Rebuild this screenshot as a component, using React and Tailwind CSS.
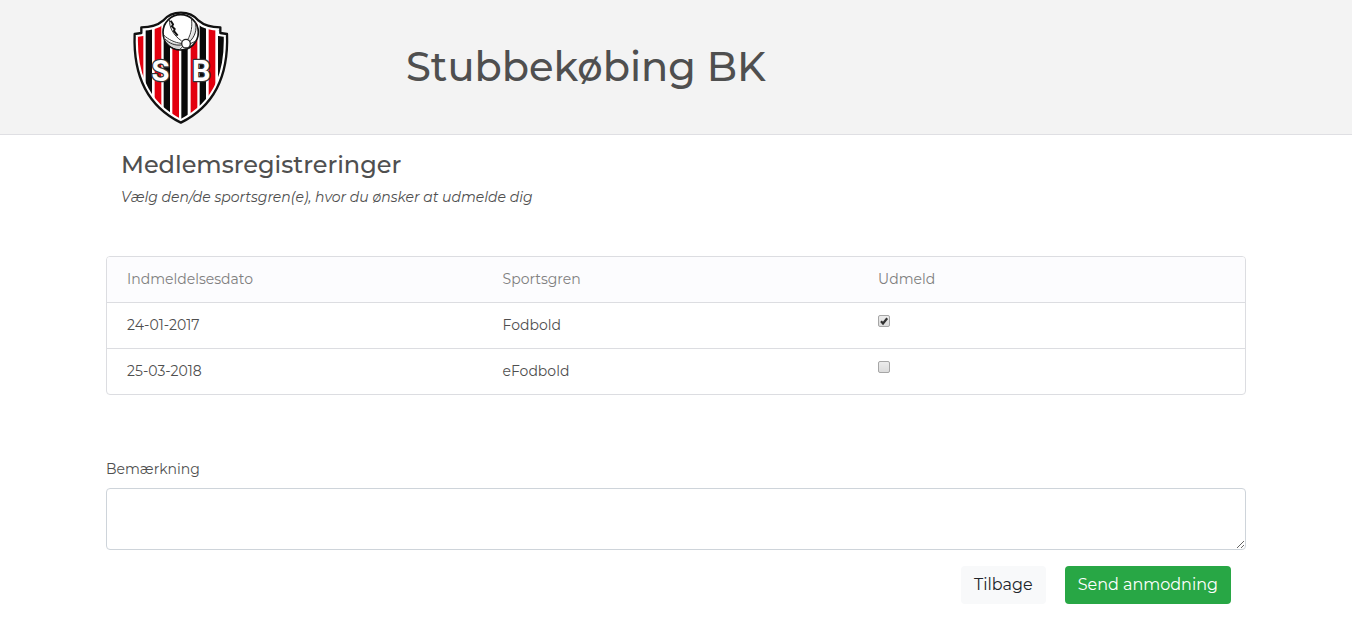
import { useState } from 'react';

const registrations = [
  { id: 1, date: '24-01-2017', sport: 'Fodbold' },
  { id: 2, date: '25-03-2018', sport: 'eFodbold' },
];

const shieldPath =
  'M167.500 23C146 23 127 32 114 47C97 62 74 67 49 67V84L29 87C25 190 50 295 167.500 353C285 295 310 190 306 87L286 84V67C261 67 238 62 221 47C208 32 189 23 167.500 23Z';

const ClubLogo = () => (
  <svg viewBox="-12 6 360 360" className="size-[120px]" role="img" aria-label="Stubbekøbing BK">
    <defs>
      <clipPath id="shield">
        <path d={shieldPath} />
      </clipPath>
    </defs>
    <path d={shieldPath} fill="#fff" />
    <g clipPath="url(#shield)">
      {[35, 89, 142, 197, 251].map((x) => (
        <rect key={x} x={x} y="20" width="20" height="340" fill="#e3000f" />
      ))}
      {[62, 116, 169, 224, 279].map((x) => (
        <rect key={x} x={x} y="20" width="19" height="340" fill="#0a0a0a" />
      ))}
    </g>
    <path d={shieldPath} fill="none" stroke="#fff" strokeWidth="20" clipPath="url(#shield)" />
    <path d={shieldPath} fill="none" stroke="#111" strokeWidth="7" strokeLinejoin="round" />
    <circle cx="167" cy="82" r="53" fill="#fff" stroke="#111" strokeWidth="5" />
    <path d="M117 97C130 108 150 116 168 118L165 131C142 132 124 118 117 97Z" fill="#d4d4d4" />
    <path d="M206 50C219 68 216 91 194 110L190 104C203 86 207 68 206 50Z" fill="#e2e2e2" />
    <g fill="none" stroke="#333" strokeWidth="3">
      <path d="M134 44C131 65 146 92 170 108" />
      <path d="M199 40C203 62 199 86 188 104" />
      <path d="M210 51C218 73 209 96 193 111" />
      <path d="M116 90C130 104 150 113 168 115" />
      <path d="M119 101C134 117 152 122 168 120" />
      <path d="M172 126L162 135M187 128L193 130M194 117L213 108" />
    </g>
    <path d="M137 47L144 58L141 64L149 72L147 78L158 92" fill="none" stroke="#111" strokeWidth="6" />
    <circle cx="183" cy="116" r="13" fill="#fff" stroke="#222" strokeWidth="4" />
    <g
      className="font-[Roboto,sans-serif]"
      fontSize="87"
      fontWeight="700"
      textAnchor="middle"
      fill="#fff"
      stroke="#333"
      strokeWidth="8"
      strokeLinejoin="round"
      paintOrder="stroke"
    >
      <text x="106" y="229">S</text>
      <text x="229" y="229">B</text>
    </g>
  </svg>
);

const Checkbox = ({ checked, onChange, label }) => (
  <label className="grid size-3">
    <input
      type="checkbox"
      checked={checked}
      onChange={onChange}
      aria-label={label}
      className="col-start-1 row-start-1 size-3 appearance-none rounded-xs border border-[#a6a6a6] bg-linear-to-b from-[#ececec] to-[#dcdcdc]"
    />
    {checked && (
      <svg viewBox="0 0 12 12" className="pointer-events-none col-start-1 row-start-1 size-3">
        <path d="M3 6.300L5 8.500L9.200 3.200" fill="none" stroke="#333" strokeWidth="2.200" />
      </svg>
    )}
  </label>
);

const App = () => {
  const [selected, setSelected] = useState([1]);
  const [remark, setRemark] = useState('');

  const toggle = (id) => {
    setSelected((prev) => (prev.includes(id) ? prev.filter((item) => item !== id) : [...prev, id]));
  };

  return (
    <div className="font-[Montserrat,Inter,sans-serif] text-[14px] leading-[21px] text-[#4f4f4f]">
      <header className="border-b border-[#dfdfe3] bg-[#f3f3f3] py-[7px]">
        <div className="mx-auto grid max-w-[1140px] grid-cols-4 items-center">
          <div className="px-[15px]">
            <ClubLogo />
          </div>
          <h1 className="col-span-3 px-[15px] text-[40px] leading-12 font-medium">Stubbekøbing BK</h1>
        </div>
      </header>

      <main className="mx-auto max-w-[1140px] pt-4 pb-8">
        <div className="px-[15px]">
          <h2 className="text-[24px] leading-7 font-medium">Medlemsregistreringer</h2>
          <p className="mt-2 italic">Vælg den/de sportsgren(e), hvor du ønsker at udmelde dig</p>
        </div>

        <div className="mt-12 overflow-hidden rounded border border-[#dcdde1]">
          <table className="w-full table-fixed text-left">
            <thead className="bg-[#fcfcfe] text-[#808080]">
              <tr>
                <th className="w-[33%] px-5 py-3 font-normal">Indmeldelsesdato</th>
                <th className="w-[33%] px-5 py-3 font-normal">Sportsgren</th>
                <th className="px-5 py-3 font-normal">Udmeld</th>
              </tr>
            </thead>
            <tbody>
              {registrations.map((item) => (
                <tr key={item.id} className="border-t border-[#dcdde1]">
                  <td className="px-5 py-3">{item.date}</td>
                  <td className="px-5 py-3">{item.sport}</td>
                  <td className="px-5 py-3 align-top">
                    <Checkbox
                      checked={selected.includes(item.id)}
                      onChange={() => toggle(item.id)}
                      label={`Udmeld ${item.sport}`}
                    />
                  </td>
                </tr>
              ))}
            </tbody>
          </table>
        </div>

        <form onSubmit={(e) => e.preventDefault()}>
          <label htmlFor="remark" className="mt-16 mb-2 block">
            Bemærkning
          </label>
          <textarea
            id="remark"
            rows={2}
            value={remark}
            onChange={(e) => setRemark(e.target.value)}
            className="block w-full rounded border border-[#ced4da] bg-white px-3 py-[9px]"
          />
          <div className="mt-4 flex justify-end gap-[19px] px-[15px] text-[16px] leading-6">
            <button type="button" className="rounded bg-[#f8f9fa] px-[13px] py-[7px] text-[#212529]">
              Tilbage
            </button>
            <button type="submit" className="rounded bg-[#28a745] px-[13px] py-[7px] text-white">
              Send anmodning
            </button>
          </div>
        </form>
      </main>
    </div>
  );
};

export default App;
